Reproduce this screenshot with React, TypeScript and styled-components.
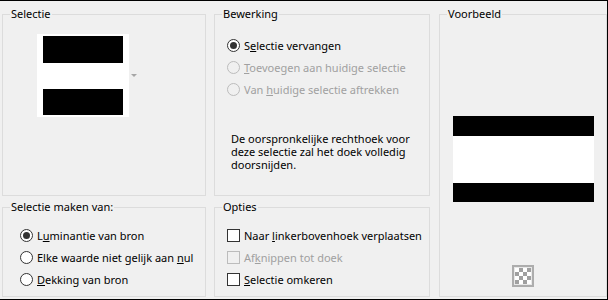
import React from 'react';
import styled, { createGlobalStyle } from 'styled-components';

const GlobalStyle = createGlobalStyle`
  html, body {
    margin: 0;
    padding: 0;
    background: #f0f0f0;
  }
  body {
    font-family: "Noto Sans", "Liberation Sans", sans-serif;
    font-size: 11px;
    color: #000;
  }
`;

interface IOption {
  label: React.ReactNode;
  checked?: boolean;
  disabled?: boolean;
}

function App() {
  return (
    <>
      <GlobalStyle/>
      <Window>
        <Group $col={ 1 } $row={ 1 }>
          <Legend>Selectie</Legend>
          <ThumbRow>
            <Thumb>
              <Bar $h={ 27 }/>
              <Bar $h={ 26 }/>
            </Thumb>
            <DropArrow/>
          </ThumbRow>
        </Group>

        <Group $col={ 2 } $row={ 1 }>
          <Legend>Bewerking</Legend>
          <OptionList $top={ 12 } $left={ 12 }>
            { bewerking.map((o, i) => <Radio key={ i } { ...o }/>) }
          </OptionList>
          <Description>
            De oorspronkelijke rechthoek voor<br/>
            deze selectie zal het doek volledig<br/>
            doorsnijden.
          </Description>
        </Group>

        <PreviewGroup>
          <Legend>Voorbeeld</Legend>
          <Preview>
            <PreviewBand $h={ 20 } $dark/>
            <PreviewBand $h={ 47 }/>
            <PreviewBand $h={ 19 } $dark/>
          </Preview>
          <CheckerButton/>
        </PreviewGroup>

        <Group $col={ 1 } $row={ 2 }>
          <Legend>Selectie maken van:</Legend>
          <OptionList $top={ 9 } $left={ 17 }>
            { bron.map((o, i) => <Radio key={ i } { ...o }/>) }
          </OptionList>
        </Group>

        <Group $col={ 2 } $row={ 2 }>
          <Legend>Opties</Legend>
          <OptionList $top={ 9 } $left={ 12 }>
            { opties.map((o, i) => <Check key={ i } { ...o }/>) }
          </OptionList>
        </Group>
      </Window>
    </>
  );
}

const bewerking: IOption[] = [
  { label: <>S<u>e</u>lectie vervangen</>, checked: true },
  { label: <><u>T</u>oevoegen aan huidige selectie</>, disabled: true },
  { label: <>Van <u>h</u>uidige selectie aftrekken</>, disabled: true },
];

const bron: IOption[] = [
  { label: <>L<u>u</u>minantie van bron</>, checked: true },
  { label: <>Elke waarde niet gelijk aan <u>n</u>ul</> },
  { label: <><u>D</u>ekking van bron</> },
];

const opties: IOption[] = [
  { label: <>Naar <u>l</u>inkerbovenhoek verplaatsen</> },
  { label: <>Af<u>k</u>nippen tot doek</>, disabled: true },
  { label: <><u>S</u>electie omkeren</> },
];

function Radio(props: IOption) {
  return (
    <Option $disabled={ props.disabled }>
      <RadioCircle $disabled={ props.disabled }>
        { props.checked && <RadioDot/> }
      </RadioCircle>
      <span>{ props.label }</span>
    </Option>
  );
}

function Check(props: IOption) {
  return (
    <Option $disabled={ props.disabled }>
      <CheckBox $disabled={ props.disabled }/>
      <span>{ props.label }</span>
    </Option>
  );
}

const Window = styled.div`
  width: 608px;
  height: 300px;
  box-sizing: border-box;
  border-top: 1px solid #000;
  border-right: 1px solid #000;
  border-bottom: 1px solid #000;
  background: #f0f0f0;
  padding: 5px 0 2px 2px;
  display: grid;
  grid-template-columns: 204px 216px 169px;
  grid-template-rows: 190px 98px;
  column-gap: 8px;
  row-gap: 3px;
`;

const Group = styled.fieldset<{ $col: number; $row: number }>`
  grid-column: ${ p => p.$col };
  grid-row: ${ p => p.$row };
  margin: 0;
  padding: 0;
  min-width: 0;
  border: 1px solid #dcdcdc;
  display: flex;
  flex-direction: column;
`;

const PreviewGroup = styled(Group).attrs({ $col: 3, $row: 1 })`
  grid-row: 1 / span 2;
  margin-left: 1px;
  align-items: center;
`;

const Legend = styled.legend`
  margin-left: 7px;
  padding: 0 1px;
  line-height: 16px;
  font-size: 11px;
`;

const ThumbRow = styled.div`
  display: flex;
  align-items: center;
  margin: 12px 0 0 34px;
`;

const Thumb = styled.div`
  width: 92px;
  height: 83px;
  box-sizing: border-box;
  padding: 2px 6px;
  background: #fff;
  display: flex;
  flex-direction: column;
  justify-content: space-between;
`;

const Bar = styled.div<{ $h: number }>`
  height: ${ p => p.$h }px;
  background: #000;
`;

const DropArrow = styled.div`
  margin-left: 2px;
  width: 0;
  height: 0;
  border-left: 3px solid transparent;
  border-right: 3px solid transparent;
  border-top: 3px solid #a6a6a6;
`;

const OptionList = styled.div<{ $top: number; $left: number }>`
  display: flex;
  flex-direction: column;
  margin: ${ p => p.$top }px 0 0 ${ p => p.$left }px;
`;

const Option = styled.div<{ $disabled?: boolean }>`
  height: 22px;
  display: flex;
  align-items: center;
  gap: 4px;
  white-space: nowrap;
  color: ${ p => p.$disabled ? '#a0a0a0' : '#000' };
`;

const RadioCircle = styled.div<{ $disabled?: boolean }>`
  width: 13px;
  height: 13px;
  box-sizing: border-box;
  border-radius: 50%;
  border: 1px solid ${ p => p.$disabled ? '#bcbcbc' : '#333' };
  background: ${ p => p.$disabled ? '#f0f0f0' : '#fff' };
  display: flex;
  align-items: center;
  justify-content: center;
  flex: none;
`;

const RadioDot = styled.div`
  width: 7px;
  height: 7px;
  border-radius: 50%;
  background: #333;
`;

const CheckBox = styled.div<{ $disabled?: boolean }>`
  width: 13px;
  height: 13px;
  box-sizing: border-box;
  border: 1px solid ${ p => p.$disabled ? '#bcbcbc' : '#333' };
  background: ${ p => p.$disabled ? '#f0f0f0' : '#fff' };
  flex: none;
`;

const Description = styled.p`
  margin: 32px 0 0 16px;
  line-height: 13px;
  white-space: nowrap;
`;

const Preview = styled.div`
  width: 141px;
  margin-top: 94px;
  display: flex;
  flex-direction: column;
`;

const PreviewBand = styled.div<{ $h: number; $dark?: boolean }>`
  height: ${ p => p.$h }px;
  background: ${ p => p.$dark ? '#000' : '#fff' };
`;

const CheckerButton = styled.div`
  margin-top: 63px;
  width: 22px;
  height: 22px;
  box-sizing: border-box;
  border: 2px solid #adadad;
  padding: 1px;
  background: #e8e8e8;
  &::after {
    content: '';
    display: block;
    width: 16px;
    height: 16px;
    background: repeating-conic-gradient(#a0a0a0 0 25%, #fff 0 50%) 0 0 / 8px 8px;
  }
`;

export default App;
